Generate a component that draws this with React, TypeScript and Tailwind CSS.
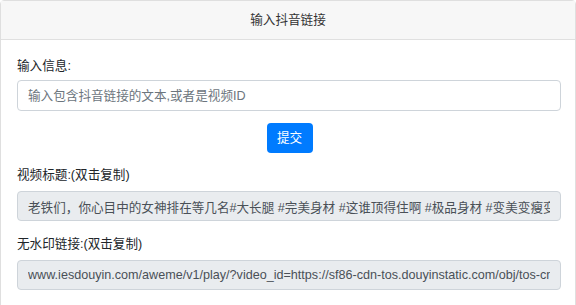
const titleText =
  "老铁们，你心目中的女神排在等几名#大长腿 #完美身材 #这谁顶得住啊 #极品身材 #变美变瘦变漂亮 #美女";
const linkText =
  "www.iesdouyin.com/aweme/v1/play/?video_id=https://sf86-cdn-tos.douyinstatic.com/obj/tos-cn-ve-15/oQyBfDgAn";

const App = () => {
  return (
    <div
      className="w-[576px] h-[305px] bg-white overflow-hidden text-[12.6px] text-[#212529]"
      style={{ fontFamily: '"Segoe UI", "Liberation Sans", "Noto Sans CJK SC", sans-serif' }}
    >
      <div className="border border-[#dfdfdf] rounded-t-[4px] h-[330px]">
        <div className="h-[39px] bg-[#f7f7f7] border-b border-[#e0e0e0] flex items-center justify-center">
          <span className="text-[12.6px] text-[#333]">输入抖音链接</span>
        </div>
        <div className="pt-4 pl-4 pr-[14px]">
          <label className="block leading-[21px] mb-[3px]">输入信息:</label>
          <input
            className="block w-full h-[31px] px-[10px] border border-[#ced4da] rounded-[4px] text-[12.6px] text-[#495057] placeholder:text-[#6c757d] outline-none"
            placeholder="输入包含抖音链接的文本,或者是视频ID"
          />
          <div className="flex justify-center mt-3">
            <button className="w-[46px] h-[30px] bg-[#007bff] text-white rounded-[4px] text-[12.6px] ml-[1px]">
              提交
            </button>
          </div>
          <label className="block leading-[21px] mt-3 mb-[5px]">视频标题:(双击复制)</label>
          <input
            readOnly
            value={titleText}
            className="block w-full h-[30px] px-[10px] bg-[#e9ecef] border border-[#ced4da] rounded-[4px] text-[12.6px] text-[#495057] outline-none"
          />
          <label className="block leading-[21px] mt-[13px] mb-[5px]">无水印链接:(双击复制)</label>
          <input
            readOnly
            value={linkText}
            className="block w-full h-[30px] px-[10px] bg-[#e9ecef] border border-[#ced4da] rounded-[4px] text-[12.6px] text-[#495057] outline-none"
          />
        </div>
      </div>
    </div>
  );
};

export default App;
